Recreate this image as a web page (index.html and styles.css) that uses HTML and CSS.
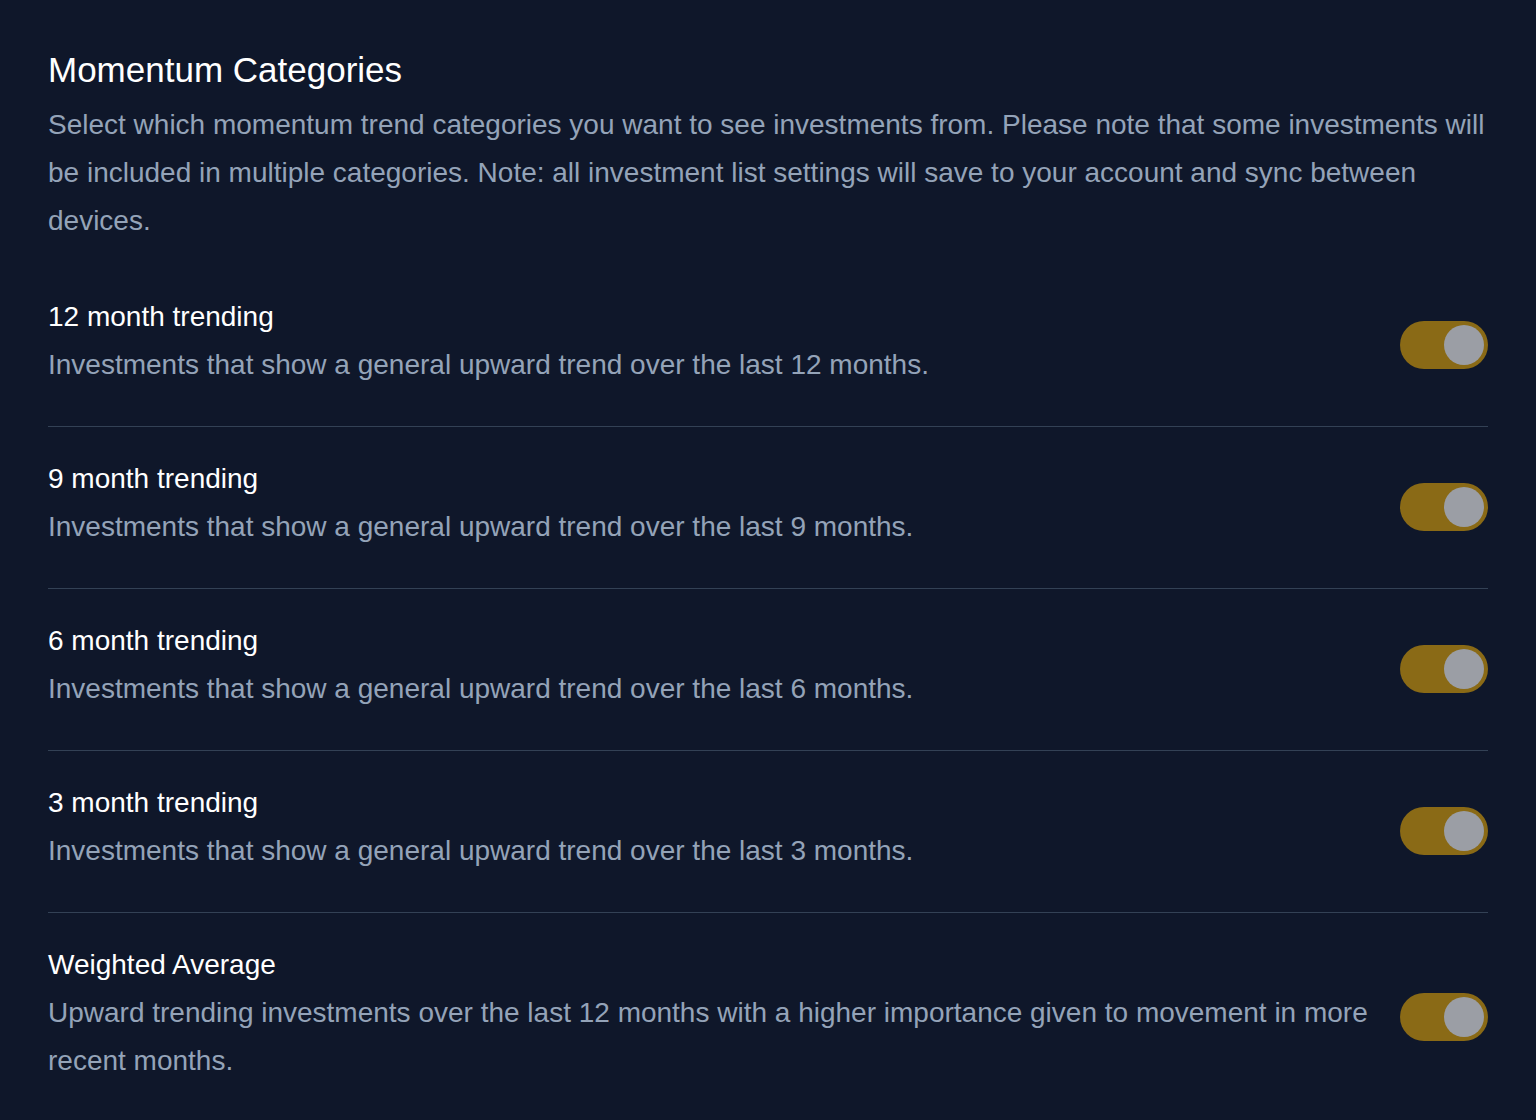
FILE: index.html
```html
<!DOCTYPE html>
<html lang="en">
<head>
    <meta charset="UTF-8">
    <meta name="viewport" content="width=device-width, initial-scale=1.0">
    <title>Momentum Categories</title>
    <link rel="stylesheet" href="styles.css">
</head>
<body>
    <div class="container">
        <h1>Momentum Categories</h1>
        <p class="intro">Select which momentum trend categories you want to see investments from. Please note that some investments will be included in multiple categories. Note: all investment list settings will save to your account and sync between devices.</p>

        <div class="row">
            <div class="text">
                <h2>12 month trending</h2>
                <p>Investments that show a general upward trend over the last 12 months.</p>
            </div>
            <button class="toggle on" aria-pressed="true"><span class="knob"></span></button>
        </div>
        <div class="row">
            <div class="text">
                <h2>9 month trending</h2>
                <p>Investments that show a general upward trend over the last 9 months.</p>
            </div>
            <button class="toggle on" aria-pressed="true"><span class="knob"></span></button>
        </div>
        <div class="row">
            <div class="text">
                <h2>6 month trending</h2>
                <p>Investments that show a general upward trend over the last 6 months.</p>
            </div>
            <button class="toggle on" aria-pressed="true"><span class="knob"></span></button>
        </div>
        <div class="row">
            <div class="text">
                <h2>3 month trending</h2>
                <p>Investments that show a general upward trend over the last 3 months.</p>
            </div>
            <button class="toggle on" aria-pressed="true"><span class="knob"></span></button>
        </div>
        <div class="row">
            <div class="text">
                <h2>Weighted Average</h2>
                <p>Upward trending investments over the last 12 months with a higher importance given to movement in more recent months.</p>
            </div>
            <button class="toggle on" aria-pressed="true"><span class="knob"></span></button>
        </div>
    </div>
</body>
</html>
```

FILE: styles.css
```css
body {
    margin: 0;
    padding: 0;
    background-color: #0f172a;
    font-family: 'Liberation Sans', Arial, sans-serif;
    color: #94a3b8;
}
.container {
    padding: 48px 48px 0 48px;
}
h1 {
    margin: 0;
    font-size: 35px;
    font-weight: 400;
    line-height: 44px;
    color: #ffffff;
}
.intro {
    margin: 9px 0 20px 0;
    font-size: 28px;
    line-height: 48px;
}
.row {
    display: flex;
    align-items: center;
    gap: 20px;
    padding: 28px 0 37px 0;
    border-bottom: 1px solid #334155;
}
.row:last-child {
    border-bottom: none;
}
.text {
    flex: 1;
}
.text h2 {
    margin: 0;
    font-size: 28px;
    font-weight: 400;
    line-height: 48px;
    color: #ffffff;
}
.text p {
    margin: 0;
    font-size: 28px;
    line-height: 48px;
}
.toggle {
    flex-shrink: 0;
    display: flex;
    align-items: center;
    justify-content: flex-end;
    width: 88px;
    height: 48px;
    margin-top: 8px;
    padding: 0 4px;
    border: none;
    border-radius: 24px;
    background-color: #8a6a16;
    cursor: pointer;
}
.knob {
    width: 40px;
    height: 40px;
    border-radius: 50%;
    background-color: #9b9ea5;
}
```
